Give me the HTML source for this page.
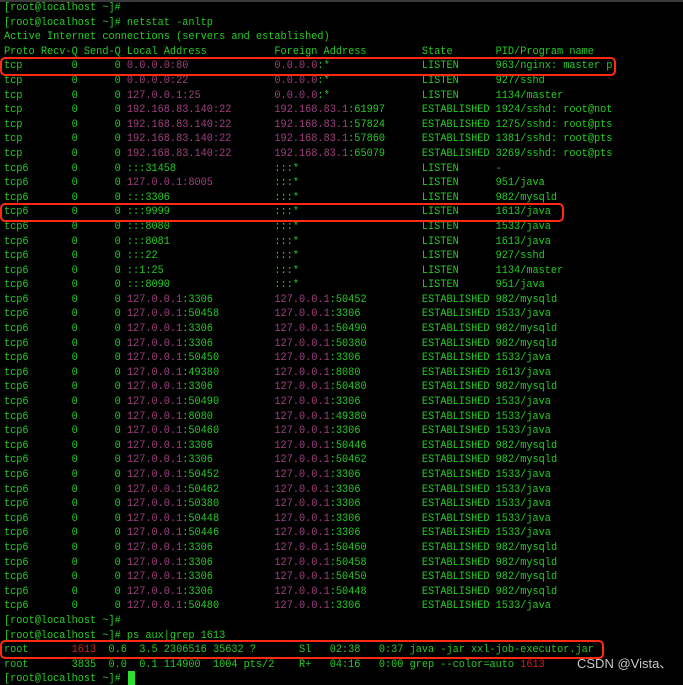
<!DOCTYPE html>
<html><head><meta charset="utf-8"><style>
html,body{margin:0;padding:0;background:#000;width:683px;height:685px;overflow:hidden;position:relative}
.bar{position:absolute;left:0;top:0;width:683px;height:2px;background:#3a3a3a}
pre{position:absolute;left:4px;top:1px;margin:0;font-family:"Liberation Mono",monospace;font-size:11.4px;line-height:14.59px;color:#26cc26;white-space:pre;transform:scaleX(0.899);transform-origin:0 0}
.p{color:#a0407f}
.r{color:#d02020}
.box{position:absolute;border:2px solid #ff2a14;border-radius:5px;box-sizing:border-box}
.cur{position:absolute;left:128px;top:671px;width:7px;height:14px;background:#2ee02e}
.wm{position:absolute;left:577px;top:653px;font-family:"Liberation Sans","Noto Sans CJK SC",sans-serif;font-size:13px;color:#c8c8c8}
</style></head><body>
<div class="bar"></div>
<pre>[root@localhost ~]#
[root@localhost ~]# netstat -anltp
Active Internet connections (servers and established)
Proto Recv-Q Send-Q Local Address           Foreign Address         State       PID/Program name
tcp        0      0 <span class="p">0.0.0.0:80</span>              <span class="p">0.0.0.0</span>:*               LISTEN      963/nginx: master p
tcp        0      0 <span class="p">0.0.0.0:22</span>              <span class="p">0.0.0.0</span>:*               LISTEN      927/sshd
tcp        0      0 <span class="p">127.0.0.1:25</span>            <span class="p">0.0.0.0</span>:*               LISTEN      1134/master
tcp        0      0 <span class="p">192.168.83.140:22</span>       <span class="p">192.168.83.1</span>:61997      ESTABLISHED 1924/sshd: root@not
tcp        0      0 <span class="p">192.168.83.140:22</span>       <span class="p">192.168.83.1</span>:57824      ESTABLISHED 1275/sshd: root@pts
tcp        0      0 <span class="p">192.168.83.140:22</span>       <span class="p">192.168.83.1</span>:57860      ESTABLISHED 1381/sshd: root@pts
tcp        0      0 <span class="p">192.168.83.140:22</span>       <span class="p">192.168.83.1</span>:65079      ESTABLISHED 3269/sshd: root@pts
tcp6       0      0 :::31458                :::*                    LISTEN      -
tcp6       0      0 <span class="p">127.0.0.1:8005</span>          :::*                    LISTEN      951/java
tcp6       0      0 :::3306                 :::*                    LISTEN      982/mysqld
tcp6       0      0 :::9999                 :::*                    LISTEN      1613/java
tcp6       0      0 :::8080                 :::*                    LISTEN      1533/java
tcp6       0      0 :::8081                 :::*                    LISTEN      1613/java
tcp6       0      0 :::22                   :::*                    LISTEN      927/sshd
tcp6       0      0 ::1:25                  :::*                    LISTEN      1134/master
tcp6       0      0 :::8090                 :::*                    LISTEN      951/java
tcp6       0      0 <span class="p">127.0.0.1</span>:3306          <span class="p">127.0.0.1</span>:50452         ESTABLISHED 982/mysqld
tcp6       0      0 <span class="p">127.0.0.1</span>:50458         <span class="p">127.0.0.1</span>:3306          ESTABLISHED 1533/java
tcp6       0      0 <span class="p">127.0.0.1</span>:3306          <span class="p">127.0.0.1</span>:50490         ESTABLISHED 982/mysqld
tcp6       0      0 <span class="p">127.0.0.1</span>:3306          <span class="p">127.0.0.1</span>:50380         ESTABLISHED 982/mysqld
tcp6       0      0 <span class="p">127.0.0.1</span>:50450         <span class="p">127.0.0.1</span>:3306          ESTABLISHED 1533/java
tcp6       0      0 <span class="p">127.0.0.1</span>:49380         <span class="p">127.0.0.1</span>:8080          ESTABLISHED 1613/java
tcp6       0      0 <span class="p">127.0.0.1</span>:3306          <span class="p">127.0.0.1</span>:50480         ESTABLISHED 982/mysqld
tcp6       0      0 <span class="p">127.0.0.1</span>:50490         <span class="p">127.0.0.1</span>:3306          ESTABLISHED 1533/java
tcp6       0      0 <span class="p">127.0.0.1</span>:8080          <span class="p">127.0.0.1</span>:49380         ESTABLISHED 1533/java
tcp6       0      0 <span class="p">127.0.0.1</span>:50460         <span class="p">127.0.0.1</span>:3306          ESTABLISHED 1533/java
tcp6       0      0 <span class="p">127.0.0.1</span>:3306          <span class="p">127.0.0.1</span>:50446         ESTABLISHED 982/mysqld
tcp6       0      0 <span class="p">127.0.0.1</span>:3306          <span class="p">127.0.0.1</span>:50462         ESTABLISHED 982/mysqld
tcp6       0      0 <span class="p">127.0.0.1</span>:50452         <span class="p">127.0.0.1</span>:3306          ESTABLISHED 1533/java
tcp6       0      0 <span class="p">127.0.0.1</span>:50462         <span class="p">127.0.0.1</span>:3306          ESTABLISHED 1533/java
tcp6       0      0 <span class="p">127.0.0.1</span>:50380         <span class="p">127.0.0.1</span>:3306          ESTABLISHED 1533/java
tcp6       0      0 <span class="p">127.0.0.1</span>:50448         <span class="p">127.0.0.1</span>:3306          ESTABLISHED 1533/java
tcp6       0      0 <span class="p">127.0.0.1</span>:50446         <span class="p">127.0.0.1</span>:3306          ESTABLISHED 1533/java
tcp6       0      0 <span class="p">127.0.0.1</span>:3306          <span class="p">127.0.0.1</span>:50460         ESTABLISHED 982/mysqld
tcp6       0      0 <span class="p">127.0.0.1</span>:3306          <span class="p">127.0.0.1</span>:50458         ESTABLISHED 982/mysqld
tcp6       0      0 <span class="p">127.0.0.1</span>:3306          <span class="p">127.0.0.1</span>:50450         ESTABLISHED 982/mysqld
tcp6       0      0 <span class="p">127.0.0.1</span>:3306          <span class="p">127.0.0.1</span>:50448         ESTABLISHED 982/mysqld
tcp6       0      0 <span class="p">127.0.0.1</span>:50480         <span class="p">127.0.0.1</span>:3306          ESTABLISHED 1533/java
[root@localhost ~]#
[root@localhost ~]# ps aux|grep 1613
root       <span class="r">1613</span>  0.6  3.5 2306516 35632 ?       Sl   02:38   0:37 java -jar xxl-job-executor.jar
root       3835  0.0  0.1 114900  1004 pts/2    R+   04:16   0:00 grep --color=auto <span class="r">1613</span>
[root@localhost ~]# </pre>
<div class="box" style="left:0;top:640px;width:604px;height:19px"></div>
<div class="box" style="left:0;top:57px;width:616px;height:19px"></div>
<div class="box" style="left:0;top:203px;width:564px;height:19px"></div>
<div class="cur"></div>
<div class="wm">CSDN @Vista、</div>
</body></html>
